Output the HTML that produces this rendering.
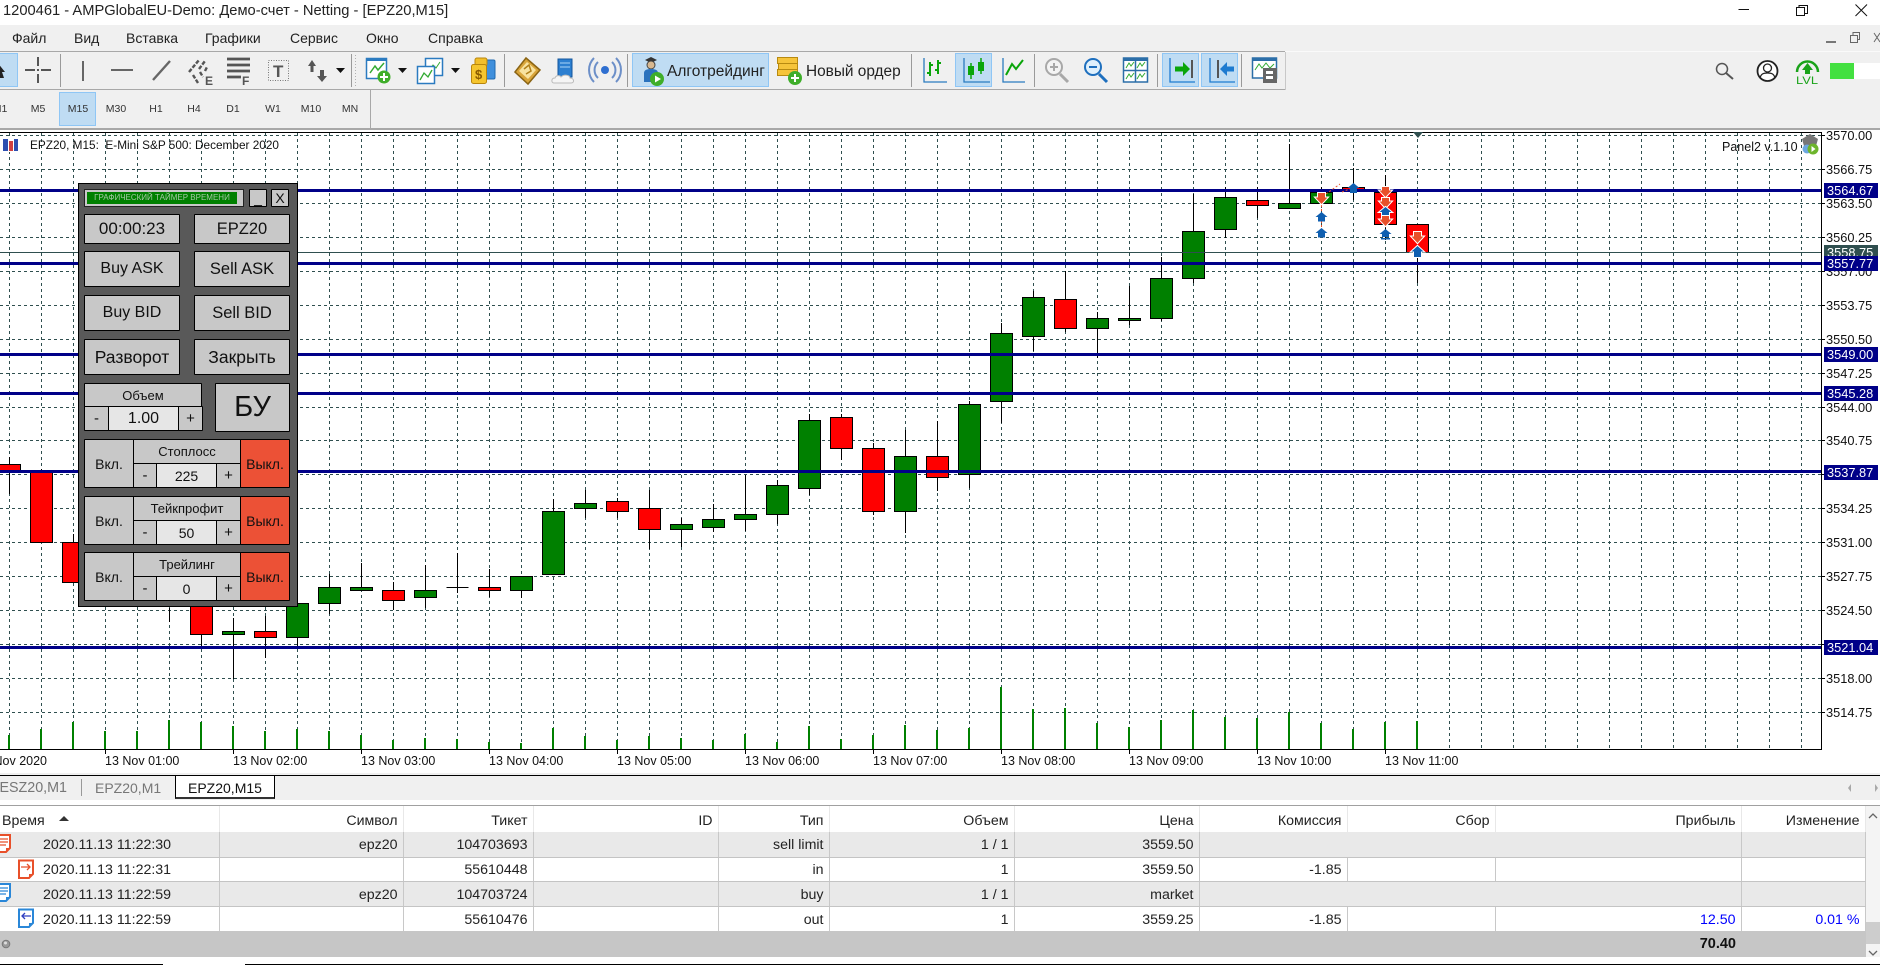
<!DOCTYPE html>
<html lang="ru"><head><meta charset="utf-8"><title>MT5</title>
<style>
html,body{margin:0;padding:0;width:1880px;height:965px;overflow:hidden;background:#f0f0f0;font-family:"Liberation Sans","Noto Sans CJK SC",sans-serif;color:#111}
.a{position:absolute}
.t{position:absolute;white-space:nowrap;line-height:1}
.m{position:absolute;top:31px;font-size:14px;line-height:1;color:#222}
.tf{position:absolute;top:104px;font-size:10.5px;line-height:1;color:#333;width:38px;text-align:center}
.b{position:absolute;box-sizing:border-box;background:#c8c8c8;border:1px solid #000;display:flex;align-items:center;justify-content:center;font-size:16px;color:#111;border-radius:1px}
.s{font-size:14px}.l{font-size:13px}.v{background:#e6e6e6}.o{background:#ec5136;font-size:14px}
svg{position:absolute;left:0;top:0;display:block}
svg text{font-family:"Liberation Sans","Noto Sans CJK SC",sans-serif}
table{position:absolute;left:0;top:806px;width:1865px;table-layout:fixed;border-collapse:collapse;font-size:14.2px;color:#222}
td,th{padding:2px 5px 0 0;text-align:right;font-weight:normal;white-space:nowrap;overflow:hidden;border-right:1px solid #c8c8c8;border-bottom:1px solid #c4c4c4;box-sizing:border-box}
th{padding-top:3px;border-right:1px solid #e8e8e8;border-bottom:0;height:26px;background:#fff}
.g td{background:#e9e9e9}.w td{background:#fff}
.nb{border-right:0}
</style></head><body>

<!-- title & menu -->
<div class="a" style="left:0;top:0;width:1880px;height:25px;background:#fff"></div>
<div class="t" style="left:3px;top:4px;font-size:14.7px;color:#222">1200461 - AMPGlobalEU-Demo: Демо-счет - Netting - [EPZ20,M15]</div>
<div class="m" style="left:12px">Файл</div><div class="m" style="left:74px">Вид</div><div class="m" style="left:126px">Вставка</div><div class="m" style="left:205px">Графики</div><div class="m" style="left:290px">Сервис</div><div class="m" style="left:366px">Окно</div><div class="m" style="left:428px">Справка</div>

<!-- toolbars -->
<div class="a" style="left:0;top:51px;width:1285px;height:1px;background:#a8a8a8"></div>
<div class="a" style="left:1285px;top:51px;width:595px;height:1px;background:#fafafa"></div>
<div class="a" style="left:0;top:89px;width:1285px;height:1px;background:#a8a8a8"></div>
<div class="a" style="left:1285px;top:52px;width:1px;height:38px;background:#c8c8c8"></div>
<div class="a" style="left:370px;top:90px;width:1px;height:38px;background:#a8a8a8"></div>
<div class="a" style="left:0;top:128px;width:1880px;height:2px;background:#a8a8a8"></div>
<div class="a" style="left:0;top:130px;width:1880px;height:2px;background:#fff"></div>

<div class="a" style="left:-2px;top:53px;width:20px;height:34px;box-sizing:border-box;background:#bfdcf3;border:1px solid #8fc6f5"></div>
<div class="a" style="left:632px;top:53px;width:137px;height:34px;box-sizing:border-box;background:#bfdcf3;border:1px solid #8fc6f5"></div>
<div class="a" style="left:955px;top:53px;width:37px;height:34px;box-sizing:border-box;background:#bfdcf3;border:1px solid #8fc6f5"></div>
<div class="a" style="left:1162px;top:53px;width:37px;height:34px;box-sizing:border-box;background:#bfdcf3;border:1px solid #8fc6f5"></div>
<div class="a" style="left:1201px;top:53px;width:37px;height:34px;box-sizing:border-box;background:#bfdcf3;border:1px solid #8fc6f5"></div>
<div class="a" style="left:59px;top:92px;width:37px;height:34px;box-sizing:border-box;background:#bfdcf3;border:1px solid #8fc6f5"></div>

<div class="t" style="left:667px;top:64px;font-size:15.5px;color:#222">Алготрейдинг</div>
<div class="t" style="left:806px;top:64px;font-size:15.4px;color:#222">Новый ордер</div>

<div class="tf" style="left:-19px">M1</div><div class="tf" style="left:19px">M5</div><div class="tf" style="left:59px">M15</div><div class="tf" style="left:97px">M30</div><div class="tf" style="left:137px">H1</div><div class="tf" style="left:175px">H4</div><div class="tf" style="left:214px">D1</div><div class="tf" style="left:254px">W1</div><div class="tf" style="left:292px">M10</div><div class="tf" style="left:331px">MN</div>

<svg width="1880" height="132" viewBox="0 0 1880 132">
<!-- separators -->
<g fill="#9a9a9a"><rect x="60" y="54" width="1" height="33"/><rect x="351" y="54" width="1" height="33"/><rect x="504" y="54" width="1" height="33"/><rect x="627" y="54" width="1" height="33"/><rect x="911" y="54" width="1" height="33"/><rect x="1034" y="54" width="1" height="33"/><rect x="1157" y="54" width="1" height="33"/><rect x="1241" y="54" width="1" height="33"/></g>
<path d="M355.5 55V86" stroke="#b0b0b0" stroke-dasharray="1 2"/>
<!-- cursor -->
<path d="M-3 62L5 72L2 72L4 78L0 78L-3 72Z" fill="#222"/>
<!-- crosshair -->
<path d="M25 70H35M41 70H51M38 57V66M38 74V83" stroke="#555" stroke-width="2" fill="none"/><rect x="37" y="69" width="2" height="2" fill="#555"/>
<!-- lines -->
<rect x="82" y="61" width="2" height="20" fill="#666"/><rect x="111" y="69" width="22" height="2" fill="#666"/><path d="M153 80L170 61" stroke="#666" stroke-width="2.4"/>
<!-- fibo E -->
<path d="M189 72L199 60M199 69L205 61M205 71L207 67M193 75L198 83M200 72L203 77" stroke="#555" stroke-width="2.4" stroke-dasharray="4 1.5" fill="none"/>
<text x="205" y="85" font-size="12" font-weight="bold" fill="#555">E</text>
<!-- F -->
<path d="M227 59H250M227 65H250M227 71H250M227 77H241" stroke="#555" stroke-width="2.8" fill="none"/>
<text x="242" y="85" font-size="12" font-weight="bold" fill="#555">F</text>
<!-- T -->
<rect x="268.5" y="60.5" width="20" height="20" fill="none" stroke="#777" stroke-dasharray="1 1.5"/>
<text x="273" y="77" font-size="17" font-weight="bold" fill="#555">T</text>
<!-- arrows -->
<path d="M312 60L316 66H313.5V72H310.5V66H308ZM322 82L327 76H324V70H320V76H317Z" fill="#555"/>
<path d="M336 68H345L340.5 73Z" fill="#111"/>
<!-- new chart -->
<rect x="366.5" y="58.5" width="20" height="20" fill="#fff" stroke="#2b7bc0" stroke-width="1.5"/><rect x="366" y="58" width="21" height="3" fill="#2b7bc0"/>
<path d="M370 73L375 66L378 70L384 63" stroke="#3a3" stroke-width="1.5" fill="none"/>
<circle cx="384" cy="77" r="6.5" fill="#3fae2a"/><path d="M384 73V81M380 77H388" stroke="#fff" stroke-width="2"/>
<path d="M398 68H407L402.5 73Z" fill="#111"/>
<!-- templates -->
<rect x="425.5" y="58.5" width="17" height="17" fill="#fff" stroke="#2b7bc0" stroke-width="1.5"/><path d="M429 71L433 65L436 68L440 62" stroke="#3a3" fill="none"/>
<rect x="417.5" y="66.5" width="17" height="17" fill="#fff" stroke="#2b7bc0" stroke-width="1.5"/><path d="M420 80L424 73L428 77L432 70" stroke="#3a3" stroke-width="1.3" fill="none"/>
<path d="M451 68H460L455.5 73Z" fill="#111"/>
<!-- money -->
<rect x="481" y="60" width="14" height="19" rx="1.5" fill="#3f8fdc" stroke="#1f6ab0"/><rect x="475" y="58" width="12" height="8" rx="2" fill="#f2bf2b" stroke="#b9860b"/>
<rect x="471.5" y="64.5" width="15" height="19" rx="2" fill="#f5c52e" stroke="#b9860b"/><text x="475" y="79" font-size="13" font-weight="bold" fill="#8a5a00">$</text>
<!-- book -->
<path d="M515 72L526 58L540 70L528 84Z" fill="#d9a53a" stroke="#8a6414" stroke-width="1.5"/><path d="M519 71L527 62L536 70L528 79Z" fill="#f8e3a0"/><path d="M524 69L529 65L531 71L526 74" stroke="#b0801a" stroke-width="1.5" fill="none"/>
<!-- cloud server -->
<rect x="558" y="59" width="14" height="18" fill="#2c7fd0" stroke="#14569c"/><path d="M560 63H570M560 67H570" stroke="#aad4f7"/>
<path d="M554 83c-3 0-3-5 1-5c1-3 5-3 6-1c3-3 9-2 9 1c4 0 5 5 1 5Z" fill="#f5f5f5" stroke="#bbb"/>
<!-- signal -->
<circle cx="605" cy="70" r="4" fill="#2f6fd0"/><path d="M598 62a11 11 0 0 0 0 16M612 62a11 11 0 0 1 0 16M594 58a17 17 0 0 0 0 24M616 58a17 17 0 0 1 0 24" stroke="#6c8fc8" stroke-width="2" fill="none"/>
<!-- algo -->
<path d="M645 60L651 57L657 60L651 63Z" fill="#333"/><circle cx="651" cy="65" r="4" fill="#d8b890" stroke="#444"/><path d="M644 82V73c0-3 3-4 7-4s7 1 7 4V82Z" fill="#2a72bd"/>
<circle cx="657" cy="79" r="7" fill="#3fae2a"/><path d="M655 75.5L661 79L655 82.5Z" fill="#fff"/>
<!-- order -->
<rect x="777.5" y="57.5" width="20" height="6" fill="#f6c43a" stroke="#b88a10"/><rect x="778.5" y="63.5" width="19" height="6" fill="#f6c43a" stroke="#b88a10"/><rect x="777.5" y="69.5" width="20" height="6" fill="#f6c43a" stroke="#b88a10"/>
<circle cx="795" cy="78" r="7" fill="#3fae2a"/><path d="M795 74V82M791 78H799" stroke="#fff" stroke-width="2"/>
<!-- bars icon -->
<g fill="none"><path d="M924 58V82H947" stroke="#2b7bc0" stroke-width="1.3"/><path d="M930 62V76M927 73H930M930 65H933M938 60V74M935 70H938M938 63H941" stroke="#0aa50a" stroke-width="2"/></g>
<!-- candle icon -->
<path d="M964 58V82H990" stroke="#2b7bc0" stroke-width="1.3" fill="none"/><path d="M971 63V79M981 58V74" stroke="#0aa50a" stroke-width="1.5"/><rect x="968" y="66" width="6" height="9" fill="#0aa50a"/><rect x="978" y="62" width="6" height="9" fill="#0aa50a"/>
<!-- line icon -->
<path d="M1003 58V82H1025" stroke="#2b7bc0" stroke-width="1.3" fill="none"/><path d="M1006 75L1012 64L1016 69L1023 60" stroke="#0aa50a" stroke-width="2" fill="none"/>
<!-- zoom + -->
<circle cx="1054" cy="67" r="8" fill="#f4f4f4" stroke="#a8a8a8" stroke-width="2"/><path d="M1050 67H1058M1054 63V71" stroke="#a8a8a8" stroke-width="2"/><path d="M1060 74L1068 82" stroke="#a8a8a8" stroke-width="3"/>
<!-- zoom - -->
<circle cx="1093" cy="67" r="8" fill="#dff0fc" stroke="#1e6fbe" stroke-width="2"/><path d="M1089 67H1097" stroke="#1e6fbe" stroke-width="2"/><path d="M1099 74L1107 82" stroke="#1e6fbe" stroke-width="3"/>
<!-- tile -->
<rect x="1123.5" y="58" width="24" height="24" fill="#fff" stroke="#2b6ea8" stroke-width="1.5"/><rect x="1123" y="58" width="25" height="3" fill="#2b6ea8"/><path d="M1135.5 60V82M1124 70.5H1147" stroke="#2b6ea8" stroke-width="1.5"/>
<path d="M1126 68L1129 63L1131 66L1134 62M1137 68L1140 63L1142 66L1145 62M1126 79L1129 74L1131 77L1134 73M1137 79L1140 74L1142 77L1145 73" stroke="#3a3" fill="none"/>
<!-- autoscroll -->
<path d="M1170 58V82H1195" stroke="#1e7bd0" stroke-width="1.3" fill="none"/><rect x="1191" y="60" width="2" height="18" fill="#555"/><path d="M1175 66.5H1183V62L1190 69L1183 76V71.5H1175Z" fill="#0aa50a"/>
<!-- shift -->
<path d="M1210 58V82H1235" stroke="#1e7bd0" stroke-width="1.3" fill="none"/><rect x="1217" y="60" width="2" height="18" fill="#555"/><path d="M1234 66.5H1227V62L1220 69L1227 76V71.5H1234Z" fill="#1e7bd0"/>
<!-- template -->
<rect x="1252.5" y="58" width="24" height="20" fill="#fff" stroke="#2b6ea8" stroke-width="1.5"/><rect x="1252" y="58" width="25" height="3" fill="#2b6ea8"/><path d="M1255 70L1259 64L1262 68L1266 63L1270 68L1274 64" stroke="#3a3" fill="none"/>
<rect x="1263" y="68" width="14" height="15" fill="#666"/><rect x="1266" y="71" width="7" height="3" fill="#fff"/><rect x="1266" y="76" width="7" height="3" fill="#fff"/>
<!-- right side -->
<circle cx="1722" cy="69" r="5.5" fill="none" stroke="#555" stroke-width="1.5"/><path d="M1726 73L1733 79" stroke="#555" stroke-width="2"/>
<circle cx="1767.5" cy="71" r="10" fill="#fff" stroke="#222" stroke-width="1.8"/><circle cx="1767.5" cy="68" r="4" fill="none" stroke="#222" stroke-width="1.3"/><path d="M1760 78c1-4 3-5 7.5-5s6.5 1 7.5 5" fill="none" stroke="#222" stroke-width="1.3"/>
<path d="M1797 72a10.5 10.5 0 0 1 21 0" fill="none" stroke="#1aa31a" stroke-width="2.5"/><path d="M1807.5 63L1813 70H1810V74H1805V70H1802Z" fill="#1aa31a"/>
<text x="1796" y="84" font-size="11" fill="#1aa31a" textLength="22" lengthAdjust="spacingAndGlyphs">LVL</text>
<rect x="1830" y="63" width="50" height="16" fill="#fff"/><rect x="1830" y="63" width="24" height="16" fill="#43e040"/>
<!-- window controls -->
<path d="M1738.5 9.5H1749" stroke="#111"/>
<rect x="1796.5" y="7.5" width="8" height="8" fill="#fff" stroke="#111"/><path d="M1799 7V5.5H1807.5V13.5H1805" fill="none" stroke="#111"/>
<path d="M1855.5 4.5L1867 16M1867 4.5L1855.5 16" stroke="#111"/>
<rect x="1826" y="41" width="10" height="2" fill="#777"/>
<rect x="1850.5" y="35.5" width="7" height="7" fill="#f0f0f0" stroke="#666"/><path d="M1853 35V32.5H1859.5V39.5H1858" fill="none" stroke="#666"/>
<path d="M1874 33L1880 42M1880 33L1874 42" stroke="#666"/>
</svg>

<!-- chart -->
<svg width="1880" height="775" viewBox="0 0 1880 775" style="top:0" id="c">
<rect x="0" y="132" width="1880" height="643" fill="#fff"/>
<rect x="0" y="132" width="1821" height="1" fill="#000"/>
<g fill="none" stroke="#2f4f4f" stroke-dasharray="3 3">
<path d="M0 135.5H1821M0 169.5H1821M0 203.5H1821M0 237.5H1821M0 271.5H1821M0 305.5H1821M0 339.5H1821M0 373.5H1821M0 407.5H1821M0 440.5H1821M0 474.5H1821M0 508.5H1821M0 542.5H1821M0 576.5H1821M0 610.5H1821M0 644.5H1821M0 678.5H1821M0 712.5H1821"/>
<path d="M9.5 133V749M41.5 133V749M73.5 133V749M105.5 133V749M137.5 133V749M169.5 133V749M201.5 133V749M233.5 133V749M265.5 133V749M297.5 133V749M329.5 133V749M361.5 133V749M393.5 133V749M425.5 133V749M457.5 133V749M489.5 133V749M521.5 133V749M553.5 133V749M585.5 133V749M617.5 133V749M649.5 133V749M681.5 133V749M713.5 133V749M745.5 133V749M777.5 133V749M809.5 133V749M841.5 133V749M873.5 133V749M905.5 133V749M937.5 133V749M969.5 133V749M1001.5 133V749M1033.5 133V749M1065.5 133V749M1097.5 133V749M1129.5 133V749M1161.5 133V749M1193.5 133V749M1225.5 133V749M1257.5 133V749M1289.5 133V749M1321.5 133V749M1353.5 133V749M1385.5 133V749M1417.5 133V749M1449.5 133V749M1481.5 133V749M1513.5 133V749M1545.5 133V749M1577.5 133V749M1609.5 133V749M1641.5 133V749M1673.5 133V749M1705.5 133V749M1737.5 133V749M1769.5 133V749M1801.5 133V749"/>
</g>
<!-- volumes -->
<path stroke="#008000" stroke-width="2" fill="none" d="M9 735V749M41 729V749M73 722V749M105 731V749M137 731V749M169 720V749M201 722V749M233 726V749M265 731V749M297 729V749M329 731V749M361 735V749M393 740V749M425 738V749M457 739V749M489 742V749M521 743V749M553 728V749M585 736V749M617 740V749M649 736V749M681 738V749M713 740V749M745 734V749M777 742V749M809 726V749M841 739V749M873 735V749M905 725V749M937 730V749M969 728V749M1001 687V749M1033 709V749M1065 708V749M1097 723V749M1129 727V749M1161 720V749M1193 710V749M1225 717V749M1257 718V749M1289 712V749M1321 723V749M1353 729V749M1385 722V749M1417 721V749"/>
<!-- wicks -->
<path stroke="#000" fill="none" d="M9.5 457V494M41.5 469V542M73.5 534V582M169.5 608V622M201.5 607V647M233.5 618V679M265.5 616V658M297.5 603V647M329.5 574V614M361.5 563V591M393.5 582V610M425.5 565V608M457.5 553V593M489.5 569V597M521.5 576V598M553.5 499V575M585.5 490V518M617.5 498V518M649.5 490V549M681.5 518V547M713.5 504V532M745.5 475V531M777.5 480V524M809.5 414V495M841.5 414V460M873.5 443V515M905.5 430V533M937.5 421V491M969.5 401V488M1001.5 323V423M1033.5 291V351M1065.5 271V332M1097.5 312V358M1129.5 286V325M1161.5 257V321M1193.5 194V283M1225.5 187V238M1257.5 187V218M1289.5 144V209M1321.5 187V204M1353.5 168V200M1385.5 175V240M1417.5 252V283"/>
<!-- red -->
<g fill="#f00" stroke="#000">
<rect x="-1.5" y="464.5" width="22" height="7"/><rect x="30.5" y="472.5" width="22" height="70"/><rect x="62.5" y="542.5" width="22" height="40"/><rect x="190.5" y="600.5" width="22" height="34"/><rect x="254.5" y="631.5" width="22" height="6"/><rect x="382.5" y="590.5" width="22" height="10"/><rect x="478.5" y="587.5" width="22" height="3"/><rect x="606.5" y="501.5" width="22" height="10"/><rect x="638.5" y="508.5" width="22" height="21"/><rect x="830.5" y="417.5" width="22" height="31"/><rect x="862.5" y="448.5" width="22" height="63"/><rect x="926.5" y="456.5" width="22" height="21"/><rect x="1054.5" y="299.5" width="22" height="29"/><rect x="1246.5" y="200.5" width="22" height="5"/><rect x="1342.5" y="187.5" width="22" height="2"/><rect x="1374.5" y="192.5" width="22" height="32"/><rect x="1406.5" y="224.5" width="22" height="28"/>
</g>
<!-- green -->
<g fill="#008000" stroke="#000">
<rect x="222.5" y="631.5" width="22" height="3"/><rect x="286.5" y="603.5" width="22" height="34"/><rect x="318.5" y="587.5" width="22" height="16"/><rect x="350.5" y="587.5" width="22" height="3"/><rect x="414.5" y="590.5" width="22" height="7"/><rect x="510.5" y="576.5" width="22" height="14"/><rect x="542.5" y="511.5" width="22" height="63"/><rect x="574.5" y="503.5" width="22" height="5"/><rect x="670.5" y="524.5" width="22" height="5"/><rect x="702.5" y="519.5" width="22" height="8"/><rect x="734.5" y="514.5" width="22" height="5"/><rect x="766.5" y="485.5" width="22" height="29"/><rect x="798.5" y="420.5" width="22" height="68"/><rect x="894.5" y="456.5" width="22" height="55"/><rect x="958.5" y="404.5" width="22" height="70"/><rect x="990.5" y="333.5" width="22" height="68"/><rect x="1022.5" y="297.5" width="22" height="39"/><rect x="1086.5" y="318.5" width="22" height="10"/><rect x="1118.5" y="318.5" width="22" height="2"/><rect x="1150.5" y="278.5" width="22" height="40"/><rect x="1182.5" y="231.5" width="22" height="47"/><rect x="1214.5" y="197.5" width="22" height="32"/><rect x="1278.5" y="203.5" width="22" height="5"/><rect x="1310.5" y="192.5" width="22" height="11"/>
</g>
<path d="M446.5 587.5H468.5" stroke="#000"/>
<!-- horizontal lines -->
<rect x="0" y="252" width="1821" height="1" fill="#2f4f4f"/>
<g fill="#000088"><rect x="0" y="189" width="1821" height="3"/><rect x="0" y="262" width="1821" height="3"/><rect x="0" y="353" width="1821" height="3"/><rect x="0" y="392" width="1821" height="3"/><rect x="0" y="470" width="1821" height="3"/><rect x="0" y="646" width="1821" height="3"/></g>
<!-- trade markers -->
<path d="M1326 194L1340 184M1321.5 205V230M1342 192L1352 188" stroke="#e8502a" stroke-dasharray="2 2" fill="none"/>
<g fill="#0f5fb0">
<path d="M1321.5 212L1327.5 217H1325V221.5H1318V217H1315.5Z"/>
<path d="M1321.5 228L1327.5 233H1325V237.5H1318V233H1315.5Z"/>
<path d="M1353.5 183L1359.5 188H1357V193H1350V188H1347.5Z"/>
<path d="M1385.5 229L1391.5 234H1389V237H1382V234H1379.5Z"/>
<rect x="1381" y="238" width="9" height="1.5"/>
</g>
<g stroke="#fff" stroke-width="2" style="paint-order:stroke">
<path fill="#e8502a" d="M1318 193H1325V197.5H1327.5L1321.5 204L1315.5 197.5H1318Z"/>
<path fill="#e8502a" d="M1382 187H1389V190.5H1391.5L1385.5 197L1379.5 190.5H1382Z"/>
<path fill="#e8502a" d="M1382 198H1389V201.5H1391.5L1385.5 208L1379.5 201.5H1382Z"/>
<path fill="#0f5fb0" d="M1385.5 207L1391.5 212H1389V216H1382V212H1379.5Z"/>
<path fill="#e8502a" d="M1382 216H1389V219.5H1391.5L1385.5 226L1379.5 219.5H1382Z"/>
<path fill="#e8502a" d="M1414 232H1421V236.5H1423.5L1417.5 243L1411.5 236.5H1414Z"/>
<path fill="#0f5fb0" d="M1417.5 246L1423.5 251.5H1421V257H1414V251.5H1411.5Z"/>
</g>
<path d="M1413 132H1423L1418 138Z" fill="#2f4f4f"/>
<!-- axes -->
<rect x="1821" y="132" width="1" height="618" fill="#000"/><rect x="0" y="749" width="1822" height="1" fill="#000"/>
<path stroke="#000" fill="none" d="M1822 135.5H1825M1822 169.5H1825M1822 203.5H1825M1822 237.5H1825M1822 271.5H1825M1822 305.5H1825M1822 339.5H1825M1822 373.5H1825M1822 407.5H1825M1822 440.5H1825M1822 474.5H1825M1822 508.5H1825M1822 542.5H1825M1822 576.5H1825M1822 610.5H1825M1822 644.5H1825M1822 678.5H1825M1822 712.5H1825M105.5 750V754M233.5 750V754M361.5 750V754M489.5 750V754M617.5 750V754M745.5 750V754M873.5 750V754M1001.5 750V754M1129.5 750V754M1257.5 750V754M1385.5 750V754"/>
<g font-size="12.8" fill="#111">
<text x="1826" y="140">3570.00</text><text x="1826" y="174">3566.75</text><text x="1826" y="208">3563.50</text><text x="1826" y="242">3560.25</text><text x="1826" y="276">3557.00</text><text x="1826" y="310">3553.75</text><text x="1826" y="344">3550.50</text><text x="1826" y="378">3547.25</text><text x="1826" y="412">3544.00</text><text x="1826" y="445">3540.75</text><text x="1826" y="479">3537.50</text><text x="1826" y="513">3534.25</text><text x="1826" y="547">3531.00</text><text x="1826" y="581">3527.75</text><text x="1826" y="615">3524.50</text><text x="1826" y="649">3521.25</text><text x="1826" y="683">3518.00</text><text x="1826" y="717">3514.75</text>
</g>
<rect x="1824" y="245" width="54" height="14" fill="#2f4f4f"/><text x="1827" y="257" font-size="12.8" fill="#fff">3558.75</text>
<g fill="#000088"><rect x="1824" y="183" width="54" height="15"/><rect x="1824" y="256" width="54" height="15"/><rect x="1824" y="347" width="54" height="15"/><rect x="1824" y="386" width="54" height="15"/><rect x="1824" y="465" width="54" height="15"/><rect x="1824" y="640" width="54" height="15"/></g>
<g font-size="12.8" fill="#fff"><text x="1827" y="195">3564.67</text><text x="1827" y="268">3557.77</text><text x="1827" y="359">3549.00</text><text x="1827" y="398">3545.28</text><text x="1827" y="477">3537.87</text><text x="1827" y="652">3521.04</text></g>
<g font-size="12.5" fill="#111">
<text x="47" y="765" text-anchor="end">13 Nov 2020</text><text x="105" y="765">13 Nov 01:00</text><text x="233" y="765">13 Nov 02:00</text><text x="361" y="765">13 Nov 03:00</text><text x="489" y="765">13 Nov 04:00</text><text x="617" y="765">13 Nov 05:00</text><text x="745" y="765">13 Nov 06:00</text><text x="873" y="765">13 Nov 07:00</text><text x="1001" y="765">13 Nov 08:00</text><text x="1129" y="765">13 Nov 09:00</text><text x="1257" y="765">13 Nov 10:00</text><text x="1385" y="765">13 Nov 11:00</text>
</g>
<!-- legend -->
<rect x="2" y="138" width="17" height="14" fill="#fff"/><rect x="3" y="139" width="5" height="12" fill="#2d4fb0"/><rect x="9" y="141" width="4" height="10" fill="#d04040"/><rect x="14" y="139" width="4" height="12" fill="#2d4fb0"/>
<text x="30" y="149" font-size="11.8" fill="#111">EPZ20, M15:&#160;&#160;E-Mini S&amp;P 500: December 2020</text>
<text x="1722" y="151" font-size="12.5" fill="#111">Panel2 v.1.10</text>
<path d="M1802 139L1810 134L1818 139L1816 146H1804Z" fill="#777"/><circle cx="1807" cy="149" r="4.5" fill="#6aa7e0"/><circle cx="1813" cy="149" r="5.5" fill="#6db52c"/><path d="M1811.5 146L1815.5 149L1811.5 152Z" fill="#fff"/>
</svg>

<!-- panel -->
<div class="a" style="left:78px;top:183px;width:220px;height:424px;box-sizing:border-box;background:#595959;border:1px solid #000"></div>
<div class="a" style="left:84px;top:189px;width:160px;height:18px;background:#c8c8c8;box-sizing:border-box;border:1px solid #222"></div>
<div class="a" style="left:87px;top:192px;width:150px;height:12px;background:#008000;color:#a5c8a5;font-size:8px;line-height:12px;text-align:center;white-space:nowrap">ГРАФИЧЕСКИЙ ТАЙМЕР ВРЕМЕНИ</div>
<div class="b" style="left:249px;top:189px;width:18px;height:18px;font-size:14px">_</div>
<div class="b" style="left:271px;top:189px;width:18px;height:18px;font-size:14px">X</div>
<div class="b" style="left:84px;top:214px;width:96px;height:30px;font-size:17px">00:00:23</div>
<div class="b" style="left:194px;top:214px;width:96px;height:30px;font-size:16.5px">EPZ20</div>
<div class="b" style="left:84px;top:251px;width:96px;height:36px">Buy ASK</div>
<div class="b" style="left:194px;top:251px;width:96px;height:36px;font-size:16.5px">Sell ASK</div>
<div class="b" style="left:84px;top:295px;width:96px;height:36px">Buy BID</div>
<div class="b" style="left:194px;top:295px;width:96px;height:36px;font-size:16.5px">Sell BID</div>
<div class="b" style="left:84px;top:339px;width:96px;height:36px;font-size:17.5px">Разворот</div>
<div class="b" style="left:194px;top:339px;width:96px;height:36px;font-size:17.5px">Закрыть</div>
<div class="b l" style="left:84px;top:383px;width:118px;height:24px">Объем</div>
<div class="b l" style="left:84px;top:406px;width:25px;height:25px;font-size:15px">-</div>
<div class="b v" style="left:108px;top:406px;width:71px;height:25px">1.00</div>
<div class="b l" style="left:178px;top:406px;width:25px;height:25px;font-size:15px">+</div>
<div class="b" style="left:215px;top:383px;width:75px;height:49px;font-size:29px">БУ</div>

<div class="b s" style="left:84px;top:439px;width:50px;height:49px">Вкл.</div>
<div class="b l" style="left:133px;top:439px;width:108px;height:25px">Стоплосс</div>
<div class="b" style="left:133px;top:463px;width:24px;height:25px;font-size:15px">-</div>
<div class="b v s" style="left:156px;top:463px;width:61px;height:25px">225</div>
<div class="b" style="left:216px;top:463px;width:25px;height:25px;font-size:15px">+</div>
<div class="b o" style="left:240px;top:439px;width:50px;height:49px">Выкл.</div>

<div class="b s" style="left:84px;top:496px;width:50px;height:49px">Вкл.</div>
<div class="b l" style="left:133px;top:496px;width:108px;height:25px">Тейкпрофит</div>
<div class="b" style="left:133px;top:520px;width:24px;height:25px;font-size:15px">-</div>
<div class="b v s" style="left:156px;top:520px;width:61px;height:25px">50</div>
<div class="b" style="left:216px;top:520px;width:25px;height:25px;font-size:15px">+</div>
<div class="b o" style="left:240px;top:496px;width:50px;height:49px">Выкл.</div>

<div class="b s" style="left:84px;top:552px;width:50px;height:49px">Вкл.</div>
<div class="b l" style="left:133px;top:552px;width:108px;height:25px">Трейлинг</div>
<div class="b" style="left:133px;top:576px;width:24px;height:25px;font-size:15px">-</div>
<div class="b v s" style="left:156px;top:576px;width:61px;height:25px">0</div>
<div class="b" style="left:216px;top:576px;width:25px;height:25px;font-size:15px">+</div>
<div class="b o" style="left:240px;top:552px;width:50px;height:49px">Выкл.</div>

<!-- tabs -->
<div class="a" style="left:0;top:773px;width:1880px;height:2px;background:#f0f0f0"></div>
<div class="a" style="left:0;top:775px;width:1880px;height:1px;background:#000"></div>
<div class="a" style="left:0;top:776px;width:1880px;height:24px;background:#f0f0f0"></div>
<div class="a" style="left:0;top:800px;width:1880px;height:5px;background:#fff"></div>
<div class="a" style="left:0;top:805px;width:1880px;height:1px;background:#a0a0a0"></div>
<div class="a" style="left:0;top:806px;width:1880px;height:159px;background:#fff"></div>
<div class="a" style="left:175px;top:775px;width:100px;height:24px;box-sizing:border-box;background:#fff;border:1px solid #000;border-top:1px solid #000;border-bottom:2px solid #333"></div>
<div class="t" style="right:1813px;top:781px;font-size:14.3px;color:#777">MESZ20,M1</div>
<div class="a" style="left:81px;top:779px;width:1px;height:17px;background:#999"></div>
<div class="t" style="left:95px;top:781px;font-size:14px;color:#777">EPZ20,M1</div>
<div class="t" style="left:188px;top:781px;font-size:14px;color:#111">EPZ20,M15</div>
<svg width="1880" height="800" viewBox="0 0 1880 800"><path d="M1851 784L1848 788L1851 792ZM1875 784L1878 788L1875 792Z" fill="#a8a8a8"/></svg>

<!-- table -->
<table>
<colgroup><col style="width:219px"><col style="width:184px"><col style="width:130px"><col style="width:185px"><col style="width:111px"><col style="width:185px"><col style="width:185px"><col style="width:148px"><col style="width:148px"><col style="width:246px"><col style="width:124px"></colgroup>
<tr><th style="text-align:left;padding-left:2px">Время</th><th>Символ</th><th>Тикет</th><th>ID</th><th>Тип</th><th>Объем</th><th>Цена</th><th>Комиссия</th><th>Сбор</th><th>Прибыль</th><th>Изменение</th></tr>
<tr class="g" style="height:25px"><td style="text-align:left;padding-left:43px">2020.11.13 11:22:30</td><td>epz20</td><td>104703693</td><td></td><td>sell limit</td><td>1 / 1</td><td>3559.50</td><td class="nb"></td><td class="nb"></td><td></td><td></td></tr>
<tr class="w" style="height:24px"><td style="text-align:left;padding-left:43px">2020.11.13 11:22:31</td><td></td><td>55610448</td><td></td><td>in</td><td>1</td><td>3559.50</td><td>-1.85</td><td></td><td></td><td></td></tr>
<tr class="g" style="height:25px"><td style="text-align:left;padding-left:43px">2020.11.13 11:22:59</td><td>epz20</td><td>104703724</td><td></td><td>buy</td><td>1 / 1</td><td>market</td><td class="nb"></td><td class="nb"></td><td></td><td></td></tr>
<tr class="w" style="height:25px"><td style="text-align:left;padding-left:43px;border-bottom:0">2020.11.13 11:22:59</td><td style="border-bottom:0"></td><td style="border-bottom:0">55610476</td><td style="border-bottom:0"></td><td style="border-bottom:0">out</td><td style="border-bottom:0">1</td><td style="border-bottom:0">3559.25</td><td style="border-bottom:0">-1.85</td><td style="border-bottom:0"></td><td style="border-bottom:0;color:#00f">12.50</td><td style="border-bottom:0;color:#00f">0.01 %</td></tr>
</table>
<div class="a" style="left:0;top:931px;width:1866px;height:26px;background:#c6c6c6"></div>
<div class="t" style="right:144px;top:937px;font-size:14.5px;font-weight:bold;color:#111">70.40</div>
<div class="a" style="left:1866px;top:806px;width:14px;height:151px;background:#f4f4f4"></div>
<div class="a" style="left:1866px;top:922px;width:14px;height:22px;background:#cdcdcd"></div>
<div class="a" style="left:0;top:964px;width:163px;height:1px;background:#000"></div>
<div class="a" style="left:245px;top:964px;width:1635px;height:1px;background:#000"></div>
<svg width="1880" height="965" viewBox="0 0 1880 965" style="pointer-events:none">
<path d="M59 821L64 816L69 821Z" fill="#333"/>
<path d="M1869 818L1873 814L1877 818M1869 951L1873 955L1877 951" fill="none" stroke="#666" stroke-width="1.3"/>
<circle cx="6" cy="944" r="3.8" fill="#999" stroke="#777"/><circle cx="5.5" cy="943" r="1.5" fill="#ddd"/>
<!-- row icons -->
<g fill="#fff" stroke="#e8502a" stroke-width="2">
<path d="M-4 835H10V848L6 852H-4Z"/><path d="M19 860.5H33V874L29 878H19Z"/>
</g>
<path d="M-2 839H8M-2 842H8M-2 845H6M21 867H30M27 864L30 867L27 870" stroke="#e8502a" stroke-width="1.3" fill="none"/>
<path d="M6 852L10 848H6ZM29 878L33 874H29Z" fill="#e8502a"/>
<g fill="#fff" stroke="#2a87d8" stroke-width="2">
<path d="M-4 884H10V897L6 901H-4Z"/><path d="M19 909.5H33V923L29 927H19Z"/>
</g>
<path d="M-2 888H8M-2 891H8M-2 894H6" stroke="#2a87d8" stroke-width="1.3" fill="none"/>
<path d="M31 916H22M25 913L22 916L25 919" stroke="#2f3fc0" stroke-width="1.3" fill="none"/>
<path d="M6 901L10 897H6ZM29 927L33 923H29Z" fill="#2a87d8"/>
</svg>
</body></html>
